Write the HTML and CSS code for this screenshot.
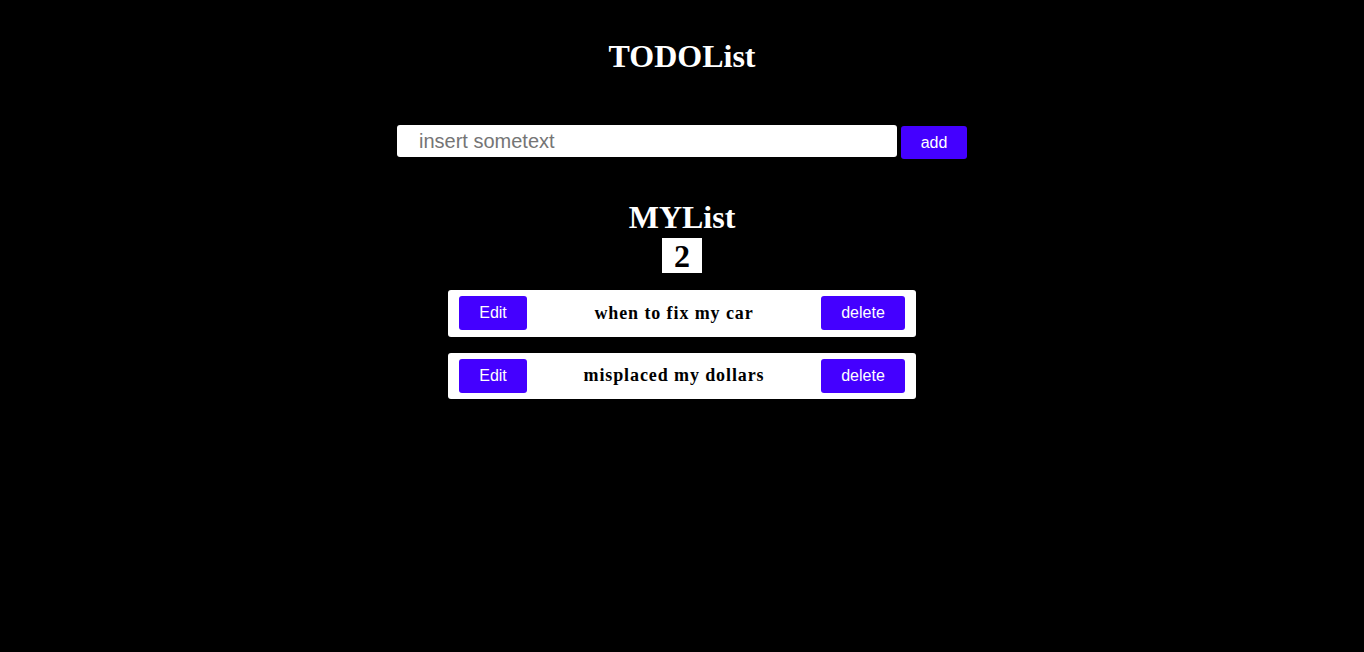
FILE: index.html
```html
<!DOCTYPE html>
<html>
<head>
<meta charset="utf-8">
<link rel="stylesheet" href="styles.css">
</head>
<body>
<div class="app">
  <h1 class="title">TODOList</h1>
  <div class="form">
    <input class="input" type="text" placeholder="insert sometext">
    <button class="btn add">add</button>
  </div>
  <h1 class="subtitle">MYList</h1>
  <div class="count">2</div>
  <ul class="list">
    <li class="item">
      <button class="btn edit">Edit</button>
      <span class="text">when to fix my car</span>
      <button class="btn del">delete</button>
    </li>
    <li class="item">
      <button class="btn edit">Edit</button>
      <span class="text">misplaced my dollars</span>
      <button class="btn del">delete</button>
    </li>
  </ul>
</div>
</body>
</html>
```
FILE: styles.css
```css
html, body {
  margin: 0;
  padding: 0;
  background: #000;
  height: 100%;
}
.app {
  display: flex;
  flex-direction: column;
  align-items: center;
  font-family: "Liberation Serif", serif;
  color: #fff;
}
.title {
  margin: 38px 0 0 0;
  font-size: 32px;
  line-height: 37px;
  font-weight: bold;
}
.form {
  display: flex;
  align-items: flex-start;
  gap: 4px;
  margin-top: 50px;
}
.input {
  box-sizing: border-box;
  width: 500px;
  height: 32px;
  border: none;
  border-radius: 3px;
  padding: 0 0 0 22px;
  font-family: "Liberation Sans", Arial, sans-serif;
  font-size: 20px;
  color: #000;
  background: #fff;
  outline: none;
}
.input::placeholder {
  color: #757575;
}
.btn {
  border: none;
  border-radius: 3px;
  background: #4400ff;
  color: #fff;
  font-family: "Liberation Sans", Arial, sans-serif;
  font-size: 16px;
  padding: 0;
  cursor: pointer;
}
.add {
  width: 66px;
  height: 33px;
  margin-top: 1px;
}
.subtitle {
  margin: 40px 0 0 0;
  font-size: 32px;
  line-height: 37px;
  font-weight: bold;
}
.count {
  width: 40px;
  height: 35px;
  margin-top: 2px;
  background: #fff;
  color: #000;
  font-size: 32px;
  font-weight: bold;
  line-height: 36px;
  text-align: center;
}
.list {
  list-style: none;
  margin: 17px 0 0 0;
  padding: 0;
  display: flex;
  flex-direction: column;
  gap: 16px;
}
.item {
  box-sizing: border-box;
  width: 468px;
  height: 46.5px;
  background: #fff;
  border-radius: 3px;
  display: flex;
  align-items: center;
  padding: 0 11px;
}
.edit {
  width: 68px;
  height: 34px;
}
.del {
  width: 84px;
  height: 34px;
}
.text {
  flex: 1;
  text-align: center;
  color: #000;
  font-size: 18px;
  font-weight: bold;
  letter-spacing: 0.9px;
}
```
